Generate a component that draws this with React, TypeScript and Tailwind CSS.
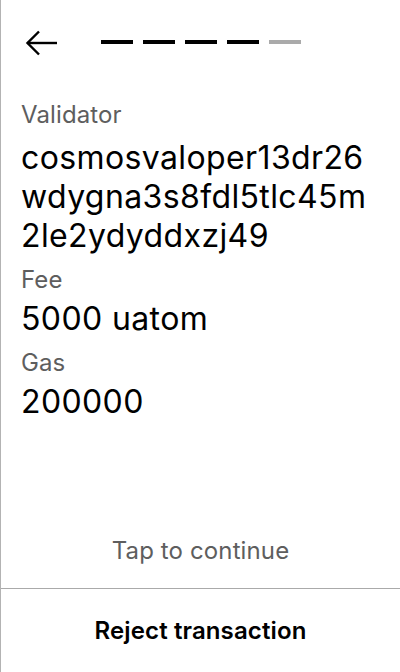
import React from "react";

type Field = { label: string; value: string };

const fields: Field[] = [
  { label: "Validator", value: "cosmosvaloper13dr26\nwdygna3s8fdl5tlc45m\n2le2ydyddxzj49" },
  { label: "Fee", value: "5000 uatom" },
  { label: "Gas", value: "200000" },
];

const steps = [true, true, true, true, false];

const App: React.FC = () => {
  return (
    <div className="flex h-[672px] w-[400px] flex-col border-l border-[#b3b3b3] bg-white font-['Inter',sans-serif] text-black">
      {/* header: back + progress */}
      <div className="flex items-start px-[24px] pt-[30px]">
        <button className="h-[26px] w-[33px]" aria-label="Back">
          <svg viewBox="0 0 33 26" width="33" height="26" fill="none" stroke="black" strokeWidth="2.4">
            <path d="M32 13H2.5" />
            <path d="M14 1.5L2.5 13L14 24.5" />
          </svg>
        </button>
        <div className="ml-[43px] mt-[10px] flex gap-[10px]">
          {steps.map((done, i) => (
            <span key={i} className={done ? "h-1 w-8 bg-black" : "h-1 w-8 bg-[#aaaaaa]"} />
          ))}
        </div>
      </div>

      <div className="mt-[44px] px-5">
        {fields.map((f, i) => (
          <div key={f.label} className={i === 0 ? "" : "mt-[10px]"}>
            <p className="text-[24px] leading-[30px] tracking-[0.005em] text-[#5e5e5e]">{f.label}</p>
            <p
              className={
                i === 0
                  ? "mt-2 whitespace-pre-line text-[32px] leading-[39px] tracking-[0.012em]"
                  : "mt-1 text-[32px] leading-[39px] tracking-[0.012em]"
              }
            >
              {f.value}
            </p>
          </div>
        ))}
      </div>

      <div className="flex-1" />

      <p className="pb-[22px] text-center text-[24px] leading-[30px] tracking-[0.005em] text-[#5e5e5e]">
        Tap to continue
      </p>
      <button className="flex h-[84px] items-center justify-center border-t border-[#aaaaaa] text-[24px] font-semibold tracking-[0.005em]">
        Reject transaction
      </button>
    </div>
  );
};

export default App;
